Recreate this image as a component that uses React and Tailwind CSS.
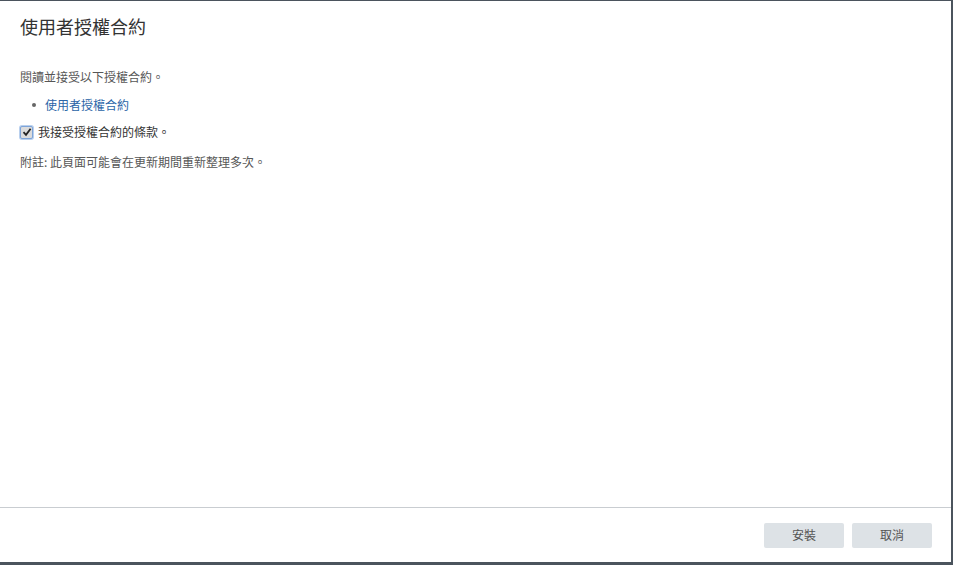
export default function App() {
  return (
    <div
      className="h-screen w-full bg-[#4b545d] overflow-hidden"
      style={{ fontFamily: '"Noto Sans CJK TC", "Noto Sans", sans-serif' }}
    >
      <div className="mt-px w-[951px] h-[561px] bg-white flex flex-col">
        {/* HEADER */}
        <div className="px-5 pt-[13px]">
          <h1 className="text-[18px] leading-6 text-[#333] font-normal">使用者授權合約</h1>
        </div>

        {/* BODY */}
        <div className="flex-1 px-5 pt-[30px] text-[12px] leading-[18px] text-[#565656]">
          <p>閱讀並接受以下授權合約。</p>

          <ul className="mt-[10px] pl-[12px]">
            <li className="flex items-center gap-[9px]">
              <span className="w-[4px] h-[4px] rounded-full bg-[#666]"></span>
              <a className="text-[#2b65a7]">使用者授權合約</a>
            </li>
          </ul>

          <label className="mt-[9px] flex items-center gap-[5px] text-[#333]">
            <span className="w-[13px] h-[13px] rounded-[2px] border border-[#7ea4d8] bg-[#dcdcdc] flex items-center justify-center shadow-[0_0_0_1px_#b9d0ee]">
              <svg width="10" height="10" viewBox="0 0 10 10">
                <path d="M1.5 5.2 L4 7.8 L8.6 1.8" fill="none" stroke="#222" strokeWidth="1.8" />
              </svg>
            </span>
            我接受授權合約的條款。
          </label>

          <p className="mt-[12px]">附註: 此頁面可能會在更新期間重新整理多次。</p>
        </div>

        {/* FOOTER */}
        <div className="h-[55px] border-t border-[#c9cdd1] flex items-center justify-end gap-2 pr-[19px]">
          <button className="w-20 h-[25px] rounded-[2px] bg-[#dde2e6] text-[12px] text-[#555]">安裝</button>
          <button className="w-20 h-[25px] rounded-[2px] bg-[#dde2e6] text-[12px] text-[#555]">取消</button>
        </div>
      </div>
    </div>
  );
}
